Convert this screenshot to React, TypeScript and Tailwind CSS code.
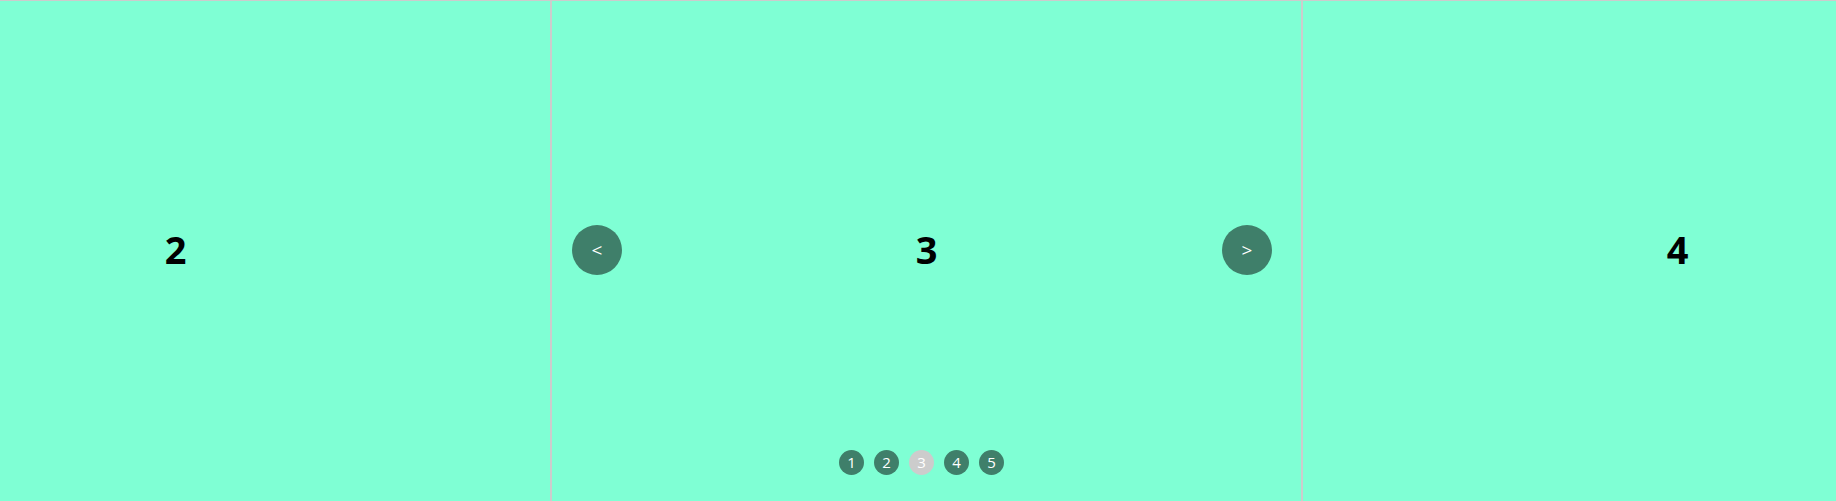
import React from "react";

const font = { fontFamily: '"Open Sans", "Noto Sans", sans-serif' };

function Slide({ n, children }: { n: number; children?: React.ReactNode }) {
  return (
    <div className="relative shrink-0 w-[751px] h-[503px] border border-[#ccc] bg-[#7fffd4] flex items-center justify-center">
      <span className="text-[38px] font-bold text-black leading-none -translate-y-[3px]" style={font}>
        {n}
      </span>
      {children}
    </div>
  );
}

export default function App() {
  return (
    <div className="w-[1836px] h-[501px] overflow-hidden bg-[#7fffd4]" style={font}>
      <div className="flex -ml-[200px]">
        <Slide n={2} />
        <Slide n={3}>
          <button className="absolute left-[20px] top-[224px] w-[50px] h-[50px] rounded-full bg-black/50 text-white text-[19px] flex items-center justify-center leading-none">
            &lt;
          </button>
          <button className="absolute right-[29px] top-[224px] w-[50px] h-[50px] rounded-full bg-black/50 text-white text-[19px] flex items-center justify-center leading-none">
            &gt;
          </button>
          <div className="absolute left-0 right-0 top-[449px] flex justify-center">
            {[1, 2, 3, 4, 5].map((d) => (
              <span
                key={d}
                className={
                  "mr-[10px] w-[25px] h-[25px] rounded-full flex items-center justify-center text-white text-[15px] leading-none " +
                  (d === 3 ? "bg-[#cccccc]" : "bg-black/50")
                }
              >
                {d}
              </span>
            ))}
          </div>
        </Slide>
        <Slide n={4} />
      </div>
    </div>
  );
}
